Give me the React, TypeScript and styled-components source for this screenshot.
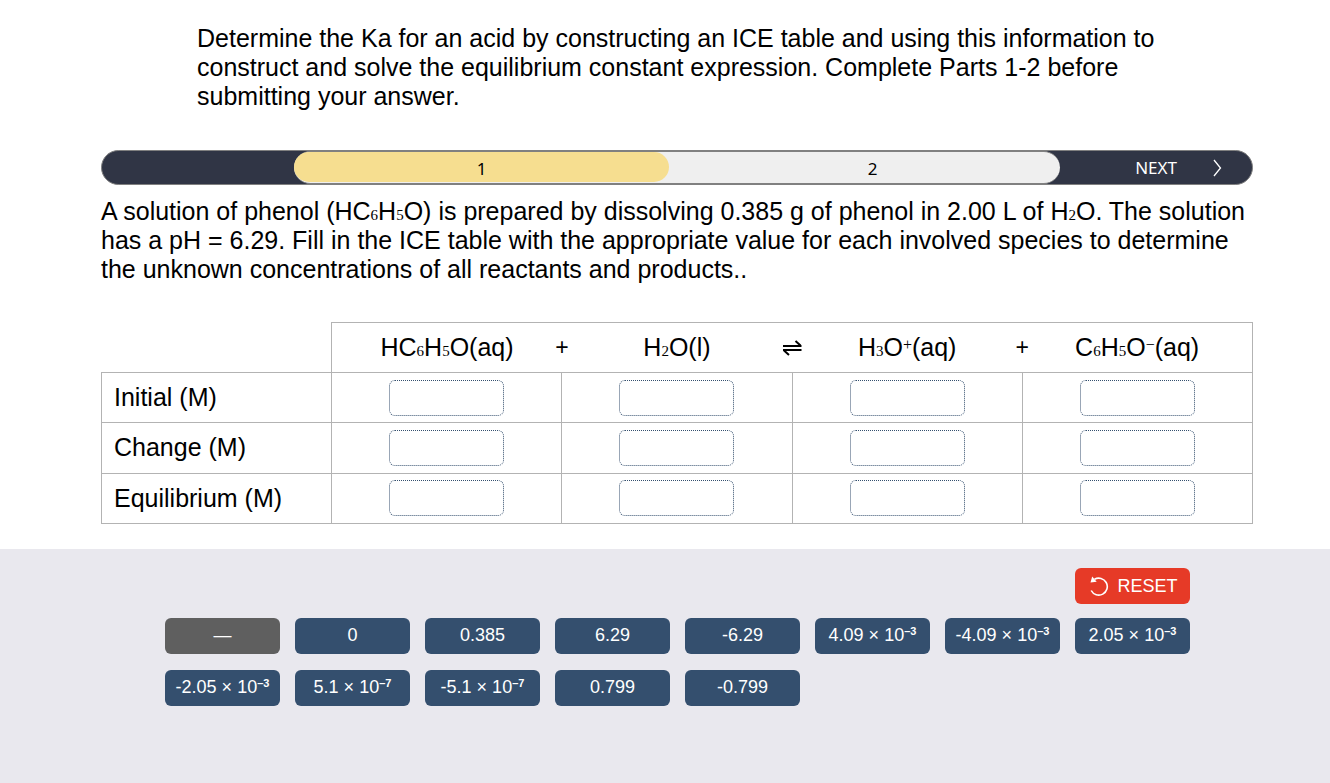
import React from "react";
import styled, { createGlobalStyle } from "styled-components";

const GlobalStyle = createGlobalStyle`
  * { box-sizing: border-box; }
  body {
    margin: 0;
    background: #fff;
    color: #000;
    font-family: "Liberation Sans", Arial, sans-serif;
    font-size: 25px;
    line-height: 29px;
  }
  svg { flex: none; }
`;

const Page = styled.div`
  display: flex;
  flex-direction: column;
  min-height: 100vh;
`;

const Main = styled.main`
  padding: 24px 77px 25px 101px;
`;

const Intro = styled.p`
  margin: 0 96px 39px;
`;

const Problem = styled.p`
  margin: 12px 0 38px;
`;

const Steps = styled.nav`
  display: grid;
  grid-template-columns: 192fr 766fr 192fr;
  height: 35px;
  overflow: hidden;
  border: 1px solid #808080;
  border-radius: 18px;
  background: #303545;
  font-family: "Noto Sans", sans-serif;
  font-size: 17px;
  line-height: 33px;
`;

const StepTrack = styled.div`
  display: grid;
  grid-template-columns: 1fr 1fr;
  column-gap: 16px;
  grid-column: 2;
  border-top: 1px solid #808080;
  border-bottom: 1px solid #808080;
  border-radius: 17px;
  background: #efefef;
`;

const BarButton = styled.button`
  padding: 0;
  border: 0;
  background: none;
  color: inherit;
  font: inherit;
  cursor: pointer;
`;

const Step = styled(BarButton)<{ $active?: boolean }>`
  height: 30px;
  border-radius: 15px;
  background: ${(p) => (p.$active ? "#f6de90" : "transparent")};
`;

const NextButton = styled(BarButton)`
  display: flex;
  align-items: center;
  justify-content: flex-end;
  gap: 36px;
  padding-right: 30px;
  color: #fff;
`;

const SubText = styled.span`
  font-family: "Liberation Serif", serif;
  font-size: 15px;
  line-height: 1;
`;

const SupText = styled.sup`
  font-family: "Liberation Serif", serif;
  font-size: 16px;
  line-height: 0;
  vertical-align: 6px;
`;

const IceTable = styled.table`
  width: 100%;
  height: 202px;
  table-layout: fixed;
  border-collapse: collapse;
`;

const Cell = styled.td`
  padding: 0;
  border: 1px solid #b3b3b3;
  text-align: center;
`;

const RowHead = styled.th`
  padding: 0 12px;
  border: 1px solid #b3b3b3;
  font-weight: 400;
  text-align: left;
`;

const SpeciesHead = styled.th`
  height: 50px;
  padding: 0;
  border-top: 1px solid #b3b3b3;
  font-weight: 400;
  &:nth-child(2) { border-left: 1px solid #b3b3b3; }
  &:last-child { border-right: 1px solid #b3b3b3; }
`;

const SpeciesRow = styled.div`
  display: flex;
  align-items: center;
`;

const Formula = styled.span`
  flex: 1;
  white-space: nowrap;
`;

/* Zero width, so that the sign straddles the edge between two columns. */
const Operator = styled.span`
  display: flex;
  justify-content: center;
  width: 0;
  font-size: 23px;
`;

const DropBox = styled.input`
  display: block;
  width: 115px;
  height: 36px;
  margin: 0 auto;
  padding: 0 8px;
  border: 1px dotted #344f6e;
  border-radius: 6px;
  background: #fff;
  font: inherit;
  font-size: 18px;
  text-align: center;
`;

const Bank = styled.section`
  flex: 1;
  padding: 19px 140px 19px 165px;
  background: #e9e8ee;
`;

const BankGrid = styled.div`
  display: grid;
  grid-template-columns: repeat(auto-fill, 115px);
  gap: 16px 15px;
`;

const ResetRow = styled.div`
  display: flex;
  justify-content: flex-end;
  margin-bottom: 14px;
`;

const Tile = styled.button<{ $tone?: "blue" | "grey" | "red" }>`
  display: flex;
  align-items: center;
  justify-content: center;
  gap: 8px;
  width: 115px;
  height: 36px;
  padding: 0 0 2px;
  border: 0;
  border-radius: 6px;
  background: ${(p) =>
    p.$tone === "red" ? "#e63a27" : p.$tone === "grey" ? "#5f5f5f" : "#344f6e"};
  color: #fff;
  font: inherit;
  font-size: 18px;
  line-height: 20px;
  white-space: nowrap;
  cursor: pointer;
`;

const ResetTile = styled(Tile)`
  padding: 0 0 0 2px;
`;

const Exponent = styled.sup`
  font-size: 11px;
  font-weight: 700;
  line-height: 0;
  vertical-align: 6px;
`;

const Sub = ({ children }: { children: React.ReactNode }) => <SubText>{children}</SubText>;

const species = [
  { name: "phenol", formula: <>HC<Sub>6</Sub>H<Sub>5</Sub>O(aq)</>, operator: "+" },
  { name: "water", formula: <>H<Sub>2</Sub>O(l)</>, operator: "eq" },
  { name: "hydronium", formula: <>H<Sub>3</Sub>O<SupText>+</SupText>(aq)</>, operator: "+" },
  { name: "phenolate", formula: <>C<Sub>6</Sub>H<Sub>5</Sub>O<SupText>−</SupText>(aq)</>, operator: "" },
];

const rows = ["Initial", "Change", "Equilibrium"];

const tiles: { base: string; exp?: string; grey?: boolean }[] = [
  { base: "—", grey: true },
  { base: "0" },
  { base: "0.385" },
  { base: "6.29" },
  { base: "-6.29" },
  { base: "4.09 × 10", exp: "–3" },
  { base: "-4.09 × 10", exp: "–3" },
  { base: "2.05 × 10", exp: "–3" },
  { base: "-2.05 × 10", exp: "–3" },
  { base: "5.1 × 10", exp: "–7" },
  { base: "-5.1 × 10", exp: "–7" },
  { base: "0.799" },
  { base: "-0.799" },
];

const Equilibrium = () => (
  <svg width="20" height="16" viewBox="0 0 20 16" fill="none" stroke="#000" strokeWidth="2" role="img" aria-label="in equilibrium with">
    <path d="M1 6H19.500M13.500 1L18.500 5.500" />
    <path d="M19.500 10H1M7 15L2 10.500" />
  </svg>
);

const Chevron = () => (
  <svg width="9" height="18" viewBox="0 0 9 18" fill="none" stroke="#fff" strokeWidth="1.300" aria-hidden="true">
    <path d="M1 1L7.500 9L1 17" />
  </svg>
);

const ResetIcon = () => (
  <svg width="20" height="20" viewBox="0 0 20 20" fill="none" aria-hidden="true">
    <path d="M5.500 3.300A8.500 8.500 0 1 1 2.200 14.500" stroke="#fff" strokeWidth="1.600" />
    <path d="M3.200 0.500L1.500 6.500L7.700 5.700Z" fill="#fff" />
  </svg>
);

export default function App() {
  return (
    <Page>
      <GlobalStyle />
      <Main>
        <Intro>
          Determine the Ka for an acid by constructing an ICE table and using this information to
          construct and solve the equilibrium constant expression. Complete Parts 1-2 before
          submitting your answer.
        </Intro>
        <Steps aria-label="Parts">
          <StepTrack>
            <Step type="button" $active aria-current="step">1</Step>
            <Step type="button">2</Step>
          </StepTrack>
          <NextButton type="button">
            NEXT
            <Chevron />
          </NextButton>
        </Steps>
        <Problem>
          A solution of phenol (HC<Sub>6</Sub>H<Sub>5</Sub>O) is prepared by dissolving 0.385 g of
          phenol in 2.00 L of H<Sub>2</Sub>O. The solution has a pH = 6.29. Fill in the ICE table
          with the appropriate value for each involved species to determine the unknown
          concentrations of all reactants and products..
        </Problem>
        <IceTable>
          <thead>
            <tr>
              <td />
              {species.map((s) => (
                <SpeciesHead key={s.name} scope="col">
                  <SpeciesRow>
                    <Formula>{s.formula}</Formula>
                    {s.operator && (
                      <Operator>{s.operator === "eq" ? <Equilibrium /> : s.operator}</Operator>
                    )}
                  </SpeciesRow>
                </SpeciesHead>
              ))}
            </tr>
          </thead>
          <tbody>
            {rows.map((row) => (
              <tr key={row}>
                <RowHead scope="row">{row} (M)</RowHead>
                {species.map((s) => (
                  <Cell key={s.name}>
                    <DropBox type="text" aria-label={`${row} concentration of ${s.name}`} />
                  </Cell>
                ))}
              </tr>
            ))}
          </tbody>
        </IceTable>
      </Main>
      <Bank aria-label="Answer tiles">
        <ResetRow>
          <ResetTile type="button" $tone="red">
            <ResetIcon />
            RESET
          </ResetTile>
        </ResetRow>
        <BankGrid>
          {tiles.map((t) => (
            <Tile key={t.base + (t.exp ?? "")} type="button" $tone={t.grey ? "grey" : "blue"}>
              <span>
                {t.base}
                {t.exp && <Exponent>{t.exp}</Exponent>}
              </span>
            </Tile>
          ))}
        </BankGrid>
      </Bank>
    </Page>
  );
}
